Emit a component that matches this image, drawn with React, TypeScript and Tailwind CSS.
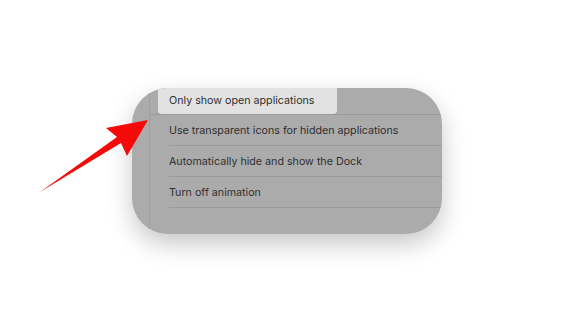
import * as React from "react"

const ITEMS = [
  "Use transparent icons for hidden applications",
  "Automatically hide and show the Dock",
  "Turn off animation",
]

function Arrow() {
  return (
    <svg
      className="pointer-events-none absolute left-0 top-0"
      width="574"
      height="323"
      viewBox="0 0 574 323"
    >
      <polygon
        points="148,120 106,128 117,137 40,192 121,143 127,156"
        fill="#f50a0a"
        strokeLinejoin="round"
      />
    </svg>
  )
}

export default function App() {
  return (
    <div
      className="relative h-[323px] w-[574px] overflow-hidden bg-white"
      style={{ fontFamily: "Inter, 'Noto Sans', sans-serif" }}
    >
      <div className="ml-[132px] mt-[88px] flex h-[146px] w-[310px] overflow-hidden rounded-[36px] bg-[#ababab] shadow-[0_10px_24px_rgba(0,0,0,0.22)]">
        <div className="w-[18px] shrink-0 border-r border-[#a0a0a0]" />
        <div className="flex flex-1 flex-col text-[10.7px] text-[#303030]">
          <div className="flex h-[27px] border-b border-[#9c9c9c]">
            <div className="ml-[8px] flex w-[179px] items-center rounded-b-[4px] bg-[#e2e2e2] pl-[11px] pt-px">
              Only show open applications
            </div>
          </div>
          {ITEMS.map((label) => (
            <div
              key={label}
              className="ml-[19px] flex h-[31px] items-center border-b border-[#9c9c9c] pt-[2px]"
            >
              {label}
            </div>
          ))}
        </div>
      </div>
      <Arrow />
    </div>
  )
}
